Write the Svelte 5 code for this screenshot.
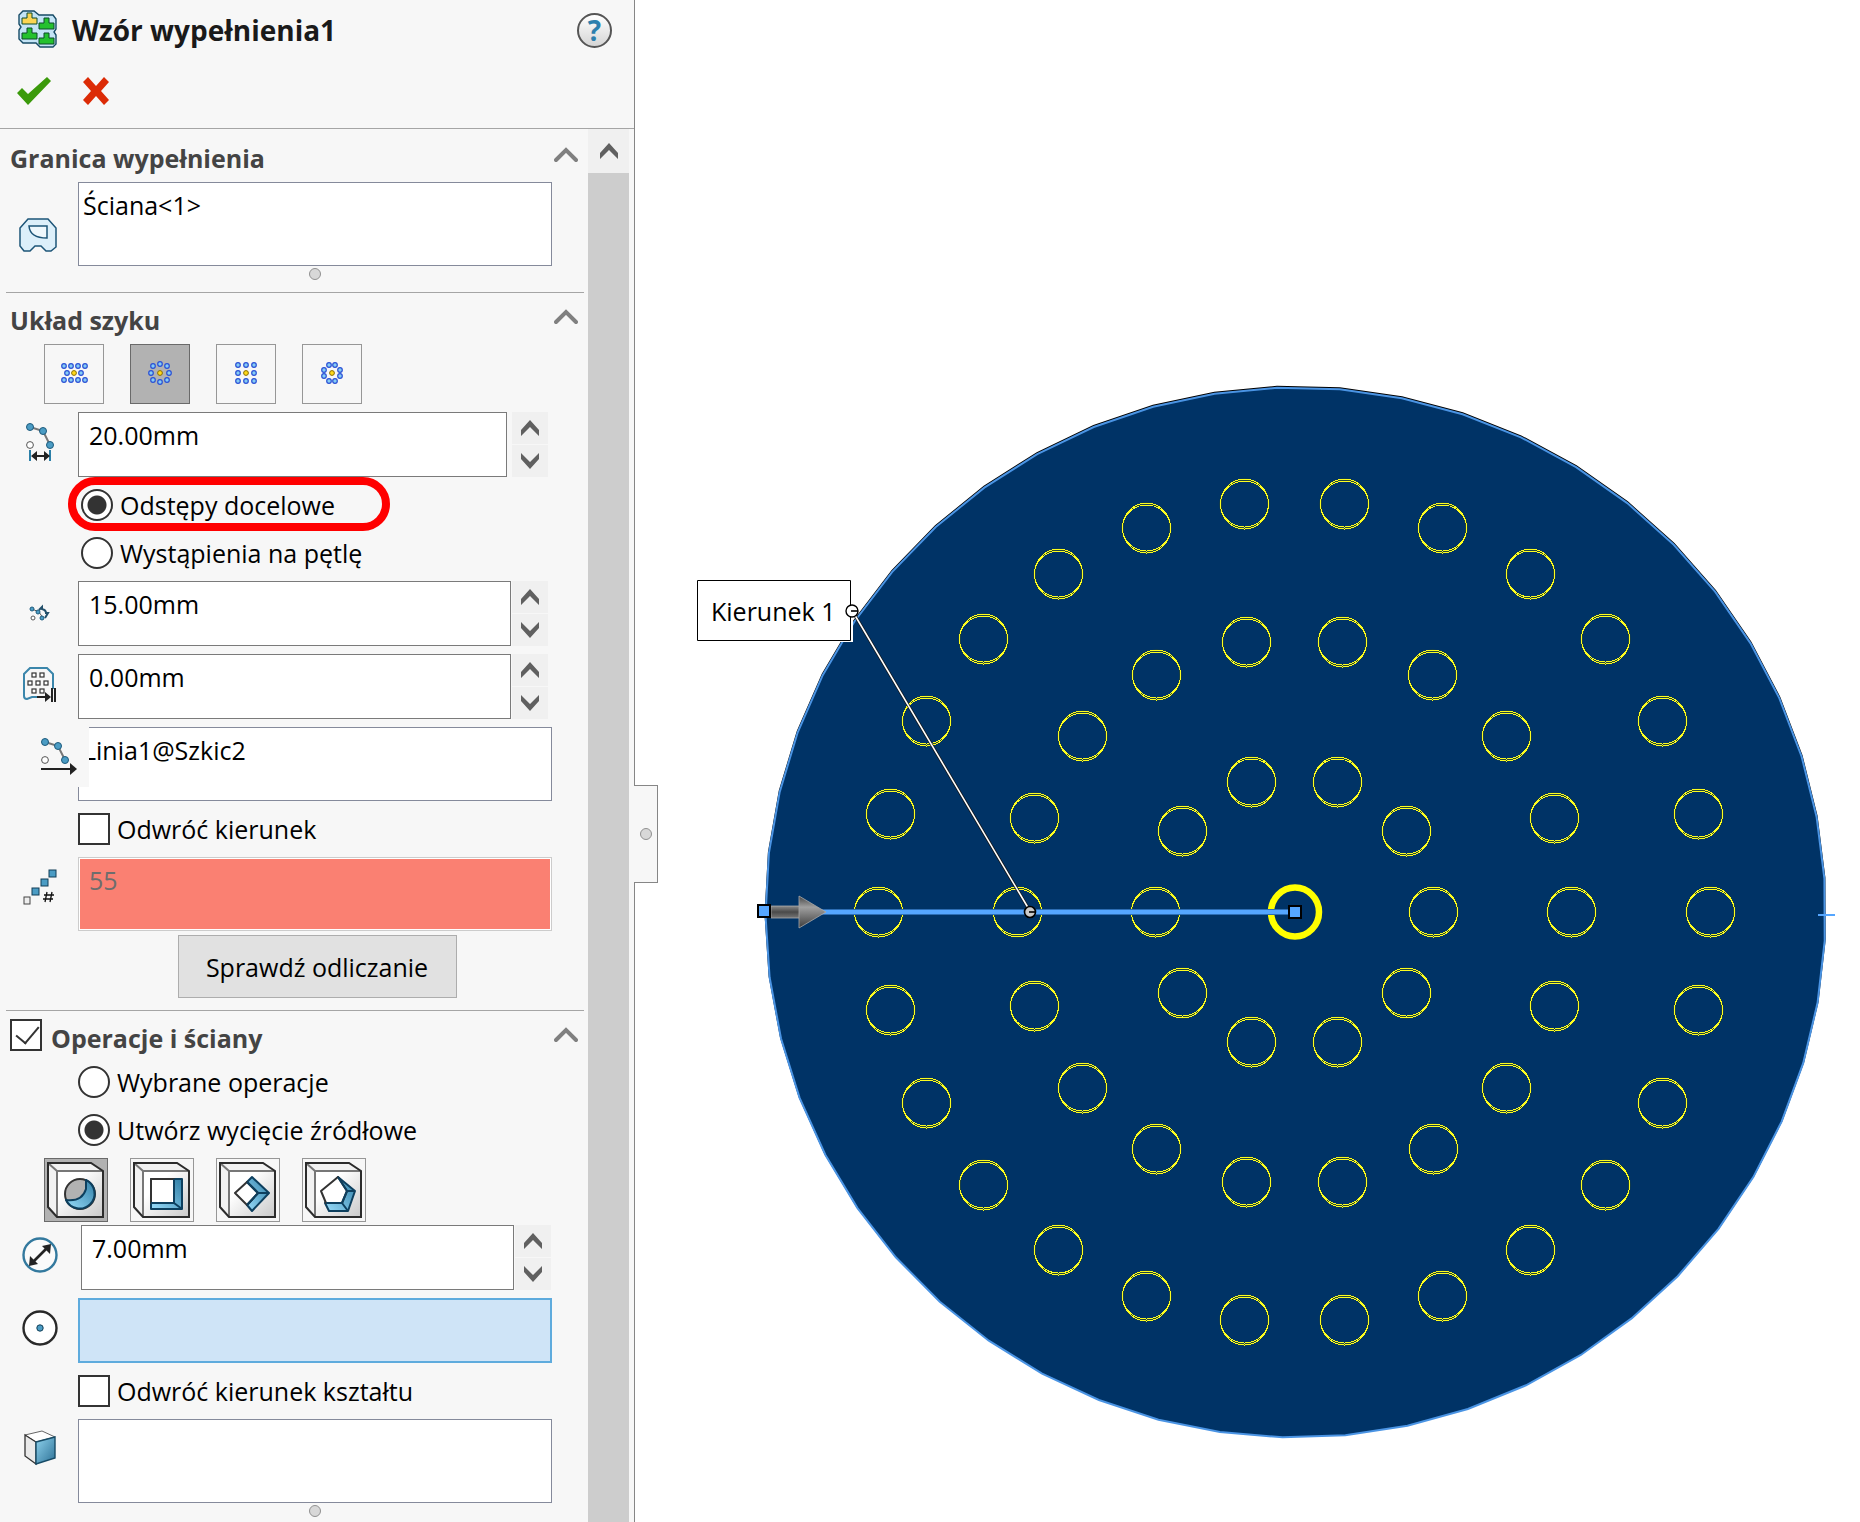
<script lang="ts">
    const layouts = [
        {
            name: 'Perforacja',
            dots: [[-10, -7], [-3, -7], [4, -7], [11, -7], [-7, 0], [7, 0], [-10, 7], [-3, 7], [4, 7], [11, 7]],
        },
        {
            name: 'Kołowy',
            dots: [[0, -9], [7, -7], [9, 0], [7, 7], [0, 9], [-7, 7], [-9, 0], [-7, -7]],
        },
        {
            name: 'Kwadratowy',
            dots: [[-8, -8], [0, -8], [8, -8], [-8, 0], [8, 0], [-8, 8], [0, 8], [8, 8]],
        },
        {
            name: 'Wielokąt',
            dots: [[-3, -8], [3, -8], [8, -3], [8, 3], [3, 8], [-3, 8], [-8, 3], [-8, -3]],
        },
    ];
    const shapes = ['Koło', 'Kwadrat', 'Romb', 'Wielokąt'];
    const boundary = 'Ściana<1>';

    let layout = $state(1);
    let shape = $state(0);
    let spacingMode = $state('target');
    let source = $state('seed');
    let flipDirection = $state(false);
    let flipShape = $state(false);
    let featuresOn = $state(true);

    // disc and hole pattern, in drawing units
    const center = { x: 1294, y: 912 };
    const rings = [
        { count: 10, rx: 139, ry: 137 },
        { count: 18, rx: 277, ry: 274 },
        { count: 26, rx: 416, ry: 411 },
    ];

    const holes = rings.flatMap((ring) =>
        Array.from({ length: ring.count }, (_, i) => {
            const a = Math.PI + (i * 2 * Math.PI) / ring.count;
            return {
                x: Math.round(center.x + ring.rx * Math.cos(a)),
                y: Math.round(center.y + ring.ry * Math.sin(a)),
            };
        })
    );

    const segments = 53;
    const disc = Array.from({ length: segments }, (_, i) => {
        const a = ((i * 360) / segments - 2) * (Math.PI / 180);
        const x = 1295.5 + 530 * Math.sin(a);
        const y = 912.5 - 525 * Math.cos(a);
        return x.toFixed(1) + ',' + y.toFixed(1);
    }).join(' ');
</script>

{#snippet arrow(down)}
    <svg class="arrow" class:down width="18" height="16" viewBox="0 0 18 16" aria-hidden="true">
        <path d="M0 10 9 0l9 10v6L9 7l-9 9z" fill="#606060" />
    </svg>
{/snippet}

{#snippet collapse()}
    <button class="collapse" aria-label="Zwiń">
        <svg width="24" height="16" viewBox="0 0 24 16">
            <path d="M2 13 12 3l10 10" fill="none" stroke="#808080" stroke-width="4" stroke-linecap="round" />
        </svg>
    </button>
{/snippet}

{#snippet spin()}
    <div class="spin">
        <button aria-label="Zwiększ">{@render arrow(false)}</button>
        <button aria-label="Zmniejsz">{@render arrow(true)}</button>
    </div>
{/snippet}

{#snippet block(x, y, fill)}
    <path d="M{x + 5} {y}h5v5h5v6h-15v-6h5z" {fill} stroke="#0c4a2a" stroke-width="1" />
{/snippet}

{#snippet chain()}
    <path d="M17 13 30 17 37 31" fill="none" stroke="#777" stroke-width="2" />
    <g fill="#4b9cc4" stroke="#1d5a7c" stroke-width="1">
        <circle cx="17" cy="13" r="3.5" />
        <circle cx="30" cy="17" r="3.5" />
        <circle cx="37" cy="31" r="3.5" />
    </g>
    <circle cx="17" cy="31" r="3.4" fill="#fff" stroke="#555" />
{/snippet}

<div class="app">
    <aside class="panel">
        <header>
            <div class="titleRow">
                <svg width="40" height="40" viewBox="0 0 40 40" aria-hidden="true">
                    <path d="M6 1h11l5 4h14l3 4v10l-2 3 2 3v9l-3 3H23l-4-4H6l-4-4v-9l2-3-2-3V5z" fill="#c4e4f6" stroke="#174b66" stroke-width="1.4" />
                    {@render block(5, 3, '#fbd552')}
                    {@render block(22, 8, '#25c12e')}
                    {@render block(5, 18, '#25c12e')}
                    {@render block(22, 23, '#25c12e')}
                </svg>
                <h1>Wzór wypełnienia1</h1>
                <button class="help" aria-label="Pomoc">?</button>
            </div>
            <div class="actions">
                <button aria-label="OK">
                    <svg width="36" height="30" viewBox="0 0 36 30">
                        <path d="m1 17 5-5 6 6L31 1l4 4-23 24z" fill="#3b9a0b" />
                    </svg>
                </button>
                <button aria-label="Anuluj">
                    <svg width="28" height="30" viewBox="0 0 28 30">
                        <path d="m1 6 5-5 8 9 8-9 5 5-8 9 8 9-5 5-8-9-8 9-5-5 8-9z" fill="#dc2b06" />
                    </svg>
                </button>
            </div>
        </header>

        <div class="body">
            <div class="sections">
                <section>
                    <div class="heading">
                        <h2>Granica wypełnienia</h2>
                        {@render collapse()}
                    </div>
                    <div class="rows">
                        <div class="row">
                            <svg class="icon" viewBox="0 0 64 64" aria-hidden="true">
                                <path d="M16 27h20l8 9v19l-5 4h-5l-5-5h-6l-5 5h-6l-4-5V36z" fill="#dceffa" stroke="#1d5578" stroke-width="1.5" />
                                <path d="M17 34h18v12q-17 0-18-12z" fill="#eef7fc" stroke="#1d5578" stroke-width="1.5" />
                            </svg>
                            <textarea class="list tall" readonly aria-label="Granica wypełnienia" value={boundary}></textarea>
                        </div>
                    </div>
                    <div class="grip"><span></span></div>
                </section>

                <section>
                    <div class="heading">
                        <h2>Układ szyku</h2>
                        {@render collapse()}
                    </div>
                    <div class="rows">
                        <div class="tiles">
                            {#each layouts as item, i}
                                <button class="tile" class:active={layout === i} aria-label={item.name} onclick={() => (layout = i)}>
                                    <svg viewBox="0 0 58 58">
                                        {#each item.dots as [x, y]}
                                            <circle cx={29 + x} cy={28 + y} r="2.3" fill="#86cdf4" stroke="#2a50d6" stroke-width="1.2" />
                                        {/each}
                                        <circle cx="29" cy="28" r="2.4" fill="#ffd91a" stroke="#8a6d00" />
                                    </svg>
                                </button>
                            {/each}
                        </div>

                        <div class="row">
                            <svg class="icon" viewBox="0 0 64 64" aria-hidden="true">
                                <g transform="translate(1 1)">{@render chain()}</g>
                                <path d="M18 37v11M38 37v11" stroke="#2b7fa8" stroke-width="2" />
                                <path d="m19 43 6-5v4h7v-4l6 5-6 5v-4h-7v4z" fill="#222" />
                            </svg>
                            <div class="field wideGap">
                                <input aria-label="Odstęp pętli" value="20.00mm" />
                                {@render spin()}
                            </div>
                        </div>

                        <div class="choices inset">
                            <label>
                                <input type="radio" name="spacing" value="target" bind:group={spacingMode} />
                                Odstępy docelowe
                            </label>
                            <label>
                                <input type="radio" name="spacing" value="loop" bind:group={spacingMode} />
                                Wystąpienia na pętlę
                            </label>
                            <div class="highlight"></div>
                        </div>

                        <div class="row">
                            <svg class="icon" viewBox="0 0 64 64" aria-hidden="true">
                                <path d="m20 27 7 3 4 6" fill="none" stroke="#555" />
                                <g fill="#4b9cc4" stroke="#1d5a7c">
                                    <circle cx="20" cy="27" r="2" />
                                    <circle cx="26" cy="30" r="2" />
                                    <circle cx="30" cy="36" r="2" />
                                </g>
                                <circle cx="21" cy="36" r="2" fill="#fff" stroke="#555" />
                                <path d="m27 28 3-3v2q4 1 4 4h2l-3 5" fill="none" stroke="#23506b" stroke-width="2" />
                            </svg>
                            <div class="field">
                                <input aria-label="Odstęp wystąpień" value="15.00mm" />
                                {@render spin()}
                            </div>
                        </div>

                        <div class="row">
                            <svg class="icon" viewBox="0 0 64 64" aria-hidden="true">
                                <path d="M41 34V19l-6-6H18l-6 6v22q0 3 3 3l5-2h8" fill="none" stroke="#3b86ab" stroke-width="2" />
                                <g fill="#fff" stroke="#333" stroke-width="1.2">
                                    {#each [[20, 18], [28, 18], [16, 26], [24, 26], [32, 26], [20, 34], [28, 34]] as [x, y]}
                                        <rect {x} {y} width="4" height="4" />
                                    {/each}
                                </g>
                                <path d="M25 42h9" stroke="#222" stroke-width="2" />
                                <path d="m33 37 6 5-6 5z" fill="#222" />
                                <path d="M40 33v14M43 33v14" stroke="#222" stroke-width="2" />
                            </svg>
                            <div class="field">
                                <input aria-label="Margines" value="0.00mm" />
                                {@render spin()}
                            </div>
                        </div>

                        <div class="row">
                            <svg class="icon" viewBox="0 0 64 64" aria-hidden="true">
                                <path d="M60-7h17v62H60z" fill="#f7f7f7" />
                                <g transform="translate(16 -3)">{@render chain()}</g>
                                <path d="M29 37h30" stroke="#222" stroke-width="2" />
                                <path d="m58 31 7 6-7 6z" fill="#222" />
                            </svg>
                            <textarea class="list" readonly aria-label="Kierunek szyku" value="Linia1@Szkic2"></textarea>
                        </div>

                        <div class="choices">
                            <label>
                                <input type="checkbox" bind:checked={flipDirection} />
                                Odwróć kierunek
                            </label>
                        </div>

                        <div class="row">
                            <svg class="icon" viewBox="0 0 64 64" aria-hidden="true">
                                <rect x="12" y="35" width="6" height="7" fill="#eee" stroke="#444" />
                                <g fill="#4b9cc4" stroke="#123f58">
                                    <rect x="20" y="26" width="7" height="7" />
                                    <rect x="29" y="17" width="7" height="7" />
                                    <rect x="37" y="8" width="7" height="7" />
                                </g>
                                <path d="m35 30-2 10M40 30l-2 10M32 33h10M31 37h10" stroke="#111" stroke-width="1.3" />
                            </svg>
                            <input class="count" aria-label="Liczba wystąpień" value="55" disabled />
                        </div>

                        <button class="verify">Sprawdź odliczanie</button>
                    </div>
                </section>

                <section>
                    <div class="heading">
                        <label>
                            <input type="checkbox" bind:checked={featuresOn} />
                            <span>Operacje i ściany</span>
                        </label>
                        {@render collapse()}
                    </div>
                    <div class="rows">
                        <div class="choices">
                            <label>
                                <input type="radio" name="source" value="selected" bind:group={source} />
                                Wybrane operacje
                            </label>
                            <label>
                                <input type="radio" name="source" value="seed" bind:group={source} />
                                Utwórz wycięcie źródłowe
                            </label>
                        </div>

                        <div class="tiles large">
                            {#each shapes as name, i}
                                <button class="tile" class:active={shape === i} aria-label={name} onclick={() => (shape = i)}>
                                    <svg viewBox="0 0 62 62">
                                        <defs>
                                            <linearGradient id="front{i}" x1="0" y1="0" x2="1" y2="1">
                                                <stop offset="0.3" stop-color="#fff" />
                                                <stop offset="1" stop-color="#c9c9c9" />
                                            </linearGradient>
                                            <linearGradient id="cut{i}" x1="1" y1="0" x2="0" y2="1">
                                                <stop offset="0" stop-color="#2f7ea6" />
                                                <stop offset="1" stop-color="#98dcfa" />
                                            </linearGradient>
                                        </defs>
                                        <path d="M3 4h43l12 8v46H12L3 48z" fill="#f2f2f2" />
                                        <path d="M12 12h46v46H12z" fill="url(#front{i})" />
                                        <path d="m3 4 9 8h46M12 12v46" fill="none" stroke="#777" stroke-width="2" />
                                        <path d="M3 4h43l12 8v46H12L3 48z" fill="none" stroke="#2c2c2c" stroke-width="2" />
                                        <g stroke="#0d3f5e" stroke-width="2" stroke-linejoin="round">
                                            {#if i === 0}
                                                <circle cx="35" cy="35" r="15" fill="#b2b2b2" stroke="#333" />
                                                <path d="M41 21a15 15 0 1 1-20 20q16 2 20-11z" fill="url(#cut0)" />
                                            {:else if i === 1}
                                                <path d="M20 20h31v30H20z" fill="url(#cut1)" />
                                                <path d="M20 20h23v24H20z" fill="#fff" stroke="#333" />
                                                <path d="M43 20v24H20M43 44l8 6" fill="none" />
                                            {:else if i === 2}
                                                <path d="m30 23 5-5 17 16-17 18-5-6 11-12z" fill="url(#cut2)" />
                                                <path d="m18 34 12-11 11 11-11 12z" fill="#fff" stroke="#333" />
                                                <path d="m30 23 11 11-11 12M41 34h11" fill="none" />
                                            {:else}
                                                <path d="m35 18 17 14-7 20H26l-4-8z" fill="url(#cut3)" />
                                                <path d="M35 18 18 32l5 12h16l5-12z" fill="#fff" stroke="#333" />
                                                <path d="m35 18 9 14-5 12H23M44 32h8M39 44l6 8" fill="none" />
                                            {/if}
                                        </g>
                                    </svg>
                                </button>
                            {/each}
                        </div>

                        <div class="row">
                            <svg class="icon" viewBox="0 0 64 64" aria-hidden="true">
                                <circle cx="28" cy="29" r="16.5" fill="#fafafa" stroke="#33799e" stroke-width="2.4" />
                                <path d="M20 37 36 21" stroke="#222" stroke-width="2.6" />
                                <path d="m39 18-1 10-8-8zM17 40l1-10 8 8z" fill="#222" />
                            </svg>
                            <div class="field right">
                                <input aria-label="Średnica" value="7.00mm" />
                                {@render spin()}
                            </div>
                        </div>

                        <div class="row">
                            <svg class="icon" viewBox="0 0 64 64" aria-hidden="true">
                                <circle cx="28" cy="29" r="16.5" fill="#fff" stroke="#2a2a2a" stroke-width="2.4" />
                                <circle cx="28" cy="29" r="3.2" fill="#4b9cc4" stroke="#123f58" />
                            </svg>
                            <input class="selecting" aria-label="Wierzchołek lub punkt szkicu" />
                        </div>

                        <div class="choices">
                            <label>
                                <input type="checkbox" bind:checked={flipShape} />
                                Odwróć kierunek kształtu
                            </label>
                        </div>

                        <div class="row">
                            <svg class="icon" viewBox="0 0 64 64" aria-hidden="true">
                                <defs>
                                    <linearGradient id="face" x1="0" y1="0" x2="1" y2="1">
                                        <stop offset="0" stop-color="#8fd3ee" />
                                        <stop offset="1" stop-color="#2d7196" />
                                    </linearGradient>
                                </defs>
                                <path d="m13 6 17-4 13 6-19 5z" fill="#fff" stroke="#666" />
                                <path d="m13 6 11 7v22l-11-8z" fill="#e9e9e9" stroke="#333" stroke-width="1.3" />
                                <path d="m24 13 19-5v21l-19 6z" fill="url(#face)" stroke="#174b66" stroke-width="1.4" />
                            </svg>
                            <textarea class="list tall" readonly aria-label="Ściany"></textarea>
                        </div>
                    </div>
                    <div class="grip"><span></span></div>
                </section>
            </div>

            <div class="scrollbar">
                <button aria-label="Przewiń w górę">{@render arrow(false)}</button>
                <div class="thumb"></div>
            </div>
        </div>

        <button class="splitter" aria-label="Zwiń panel"><span></span></button>
    </aside>

    <main>
        <svg class="scene" viewBox="635 0 1225 1522" role="img" aria-label="Podgląd wzoru wypełnienia">
            <defs>
                <linearGradient id="shaft" x1="0" y1="0" x2="0" y2="1">
                    <stop offset="0" stop-color="#8a8a8a" />
                    <stop offset="0.5" stop-color="#4a4a4a" />
                    <stop offset="1" stop-color="#777" />
                </linearGradient>
                <linearGradient id="cone" x1="0" y1="0" x2="0" y2="1">
                    <stop offset="0" stop-color="#444" />
                    <stop offset="0.35" stop-color="#a0a0a0" />
                    <stop offset="1" stop-color="#3c3c3c" />
                </linearGradient>
            </defs>

            <polygon points={disc} transform="translate(0 -1)" fill="none" stroke="#000" stroke-width="2" />
            <polygon points={disc} fill="#036" stroke="#4a94e4" stroke-width="2" />

            {#each holes as hole}
                <g fill="none">
                    <ellipse cx={hole.x + 0.5} cy={hole.y} rx="24" ry="24.5" stroke="#2c4a2c" stroke-width="2" />
                    <g stroke="#fdfd20" stroke-width="1" shape-rendering="crispEdges">
                        <ellipse cx={hole.x + 0.5} cy={hole.y} rx="24" ry="25" />
                        <ellipse cx={hole.x + 0.5} cy={hole.y} rx="24" ry="23" />
                    </g>
                </g>
            {/each}

            <ellipse cx="1295" cy="912" rx="24" ry="24.5" fill="none" stroke="#ff0" stroke-width="6.5" />
            <path d="M764 912h531" stroke="#2c6db4" stroke-width="6" />
            <path d="M764 912h531" stroke="#55a6ff" stroke-width="4" />
            <path d="M1818 915h17" stroke="#55a6ff" stroke-width="2" />

            <path d="M771 906h29v12h-29z" fill="url(#shaft)" stroke="#aaa" stroke-width="0.8" />
            <path d="m799 896 27 16-27 16z" fill="url(#cone)" stroke="#aaa" stroke-width="0.8" />
            <g fill="#55a6ff" stroke="#000" stroke-width="2">
                <rect x="758" y="905" width="12" height="12" />
                <rect x="1289" y="906" width="12" height="12" />
            </g>

            <path d="M698 581h155v61H698z" fill="#fff" />
            <path d="M697.5 580.5h153v60h-153z" fill="#fff" stroke="#000" />
            <text x="711" y="621">Kierunek 1</text>
            <path d="M853 612l177 299" stroke="#111" stroke-width="3" />
            <path d="M853 612l177 299" stroke="#fff" stroke-width="1.6" />
            <circle cx="852" cy="611" r="6" fill="#fff" stroke="#000" stroke-width="1.4" />
            <path d="M851 611h7" stroke="#000" stroke-width="1.6" />
            <circle cx="1030" cy="912" r="5.5" fill="#ccc" stroke="#000" stroke-width="1.6" />
            <path d="M1029 912h6" stroke="#000" stroke-width="1.6" />
        </svg>
    </main>
</div>

<style>
    :global(body) {
        margin: 0;
        background: #fff;
    }

    .app {
        display: flex;
        min-height: 100vh;
        font-family: 'Open Sans', 'Noto Sans', sans-serif;
        font-size: 25px;
        line-height: 36px;
        color: #000;
    }

    .app *,
    .app {
        box-sizing: border-box;
    }

    button,
    input,
    textarea {
        margin: 0;
        font: inherit;
        color: inherit;
    }

    button {
        display: flex;
        align-items: center;
        justify-content: center;
        padding: 0;
        border: 0;
        background: none;
    }

    .panel {
        position: relative;
        display: flex;
        flex-direction: column;
        flex: 0 0 635px;
        background: #f7f7f7;
        border-right: 1px solid #868686;
    }

    header {
        padding-bottom: 6px;
        border-bottom: 1px solid #a5a5a5;
    }

    .titleRow {
        display: flex;
        align-items: center;
        height: 60px;
        padding: 0 22px 0 17px;
        gap: 15px;
    }

    h1 {
        flex: 1;
        margin: 0;
        font-size: 28px;
        line-height: 36px;
        font-weight: 700;
        color: #1a1a1a;
    }

    .help {
        width: 35px;
        height: 35px;
        border: 2px solid #555;
        border-radius: 50%;
        background: linear-gradient(#fff, #d5d5d5);
        color: #2d7fae;
        font-size: 28px;
        font-weight: 700;
    }

    .actions {
        display: flex;
        align-items: center;
        height: 62px;
        padding-left: 16px;
        gap: 30px;
    }

    .body {
        display: flex;
        flex: 1;
    }

    .sections {
        flex: 1;
        min-width: 0;
        padding-top: 2px;
    }

    section {
        padding-bottom: 12px;
        border-bottom: 1px solid #a5a5a5;
        margin: 0 4px 0 6px;
    }

    section:last-child {
        padding-bottom: 5px;
        border-bottom: 0;
    }

    .heading {
        display: flex;
        align-items: flex-start;
        justify-content: space-between;
        height: 38px;
        margin: 8px 6px 5px 4px;
    }

    .heading h2,
    .heading span {
        margin: 0;
        font-size: 25px;
        line-height: 38px;
        font-weight: 700;
        color: #444;
    }

    .heading label {
        display: flex;
        align-items: flex-start;
        gap: 9px;
    }

    .collapse {
        height: 32px;
    }

    .rows {
        display: flex;
        flex-direction: column;
        gap: 8px;
        margin: 0 32px 0 -6px;
    }

    .row {
        display: grid;
        grid-template-columns: 78px 1fr;
        align-items: center;
    }

    .icon {
        position: relative;
        z-index: 1;
        width: 64px;
        height: 64px;
        margin-left: 12px;
        overflow: visible;
        pointer-events: none;
    }

    .list {
        display: block;
        width: 100%;
        height: 74px;
        padding: 0 4px;
        border: 1px solid #858a9b;
        border-radius: 0;
        background: #fff;
        line-height: 44px;
        resize: none;
        outline: 0;
        overflow: hidden;
    }

    .list.tall {
        height: 84px;
    }

    .field {
        display: flex;
        gap: 1px;
        padding-right: 3px;
    }

    .field.wideGap {
        gap: 5px;
    }

    .field.right {
        padding: 0 0 0 3px;
    }

    .field input,
    .count,
    .selecting {
        flex: 1;
        width: 100%;
        min-width: 0;
        height: 65px;
        padding: 0 10px 19px;
        border: 1px solid #7a7a7a;
        border-radius: 0;
        background: #fff;
        outline: 0;
    }

    .count {
        height: 74px;
        padding-bottom: 28px;
        border-color: #ccc;
        background: #fa8072;
        box-shadow: inset 0 0 0 1px #fff;
        color: #6d6d6d;
    }

    .selecting {
        border: 2px solid #5eabdd;
        background: #cfe4f7;
    }

    .spin {
        display: flex;
        flex-direction: column;
        gap: 1px;
        width: 36px;
        margin-right: 1px;
    }

    .spin button {
        flex: 1;
        background: #f0f0f0;
    }

    .arrow.down {
        transform: rotate(180deg);
    }

    .tiles {
        display: flex;
        gap: 26px;
        margin-left: 44px;
    }

    .tile {
        width: 60px;
        height: 60px;
        border: 1px solid #979797;
    }

    .tile svg {
        width: 100%;
        height: 100%;
    }

    .tile.active {
        border-color: #6a6a6a;
        background: #b2b2b2;
    }

    .large {
        gap: 22px;
        margin-bottom: -5px;
    }

    .large .tile {
        width: 64px;
        height: 64px;
    }

    .choices {
        position: relative;
        margin: -4px 0 -4px 78px;
    }

    .choices.inset {
        padding-left: 3px;
    }

    .choices label {
        display: flex;
        align-items: center;
        height: 48px;
        gap: 7px;
    }

    input[type='radio'],
    input[type='checkbox'] {
        position: relative;
        appearance: none;
        flex: none;
        width: 32px;
        height: 32px;
        border: 2px solid #333;
        background: #fff;
    }

    input[type='radio'] {
        border-radius: 50%;
    }

    input[type='radio']:checked {
        background: radial-gradient(circle, #333 9px, #fff 10px);
    }

    input[type='checkbox']:checked::after {
        content: '';
        position: absolute;
        left: 9px;
        top: 0;
        width: 11px;
        height: 20px;
        border: solid #333;
        border-width: 0 2px 2px 0;
        transform: rotate(40deg);
    }

    .highlight {
        position: absolute;
        left: -10px;
        top: -4px;
        width: 322px;
        height: 54px;
        border: 8px solid #f00;
        border-radius: 27px;
        pointer-events: none;
    }

    .verify {
        align-self: center;
        width: 279px;
        height: 63px;
        margin: -4px 0 0 82px;
        border: 1px solid #adadad;
        background: #e1e1e1;
    }

    .grip {
        display: flex;
        justify-content: center;
        height: 14px;
        padding: 2px 0 0 40px;
    }

    .grip span,
    .splitter span {
        width: 12px;
        height: 12px;
        border: 1px solid #909090;
        border-radius: 50%;
        background: #d8d8d8;
    }

    .scrollbar {
        display: flex;
        flex-direction: column;
        width: 41px;
        margin-right: 5px;
    }

    .scrollbar button {
        height: 44px;
        background: #f0f0f0;
    }

    .thumb {
        flex: 1;
        background: #cdcdcd;
    }

    .splitter {
        position: absolute;
        left: 100%;
        top: 785px;
        width: 24px;
        height: 98px;
        border: 1px solid #868686;
        border-left: 0;
        background: #f7f7f7;
    }

    main {
        display: flex;
        flex: 1;
        min-width: 0;
    }

    .scene {
        width: 100%;
        height: 100%;
    }

    .scene text {
        font-size: 25px;
    }
</style>
